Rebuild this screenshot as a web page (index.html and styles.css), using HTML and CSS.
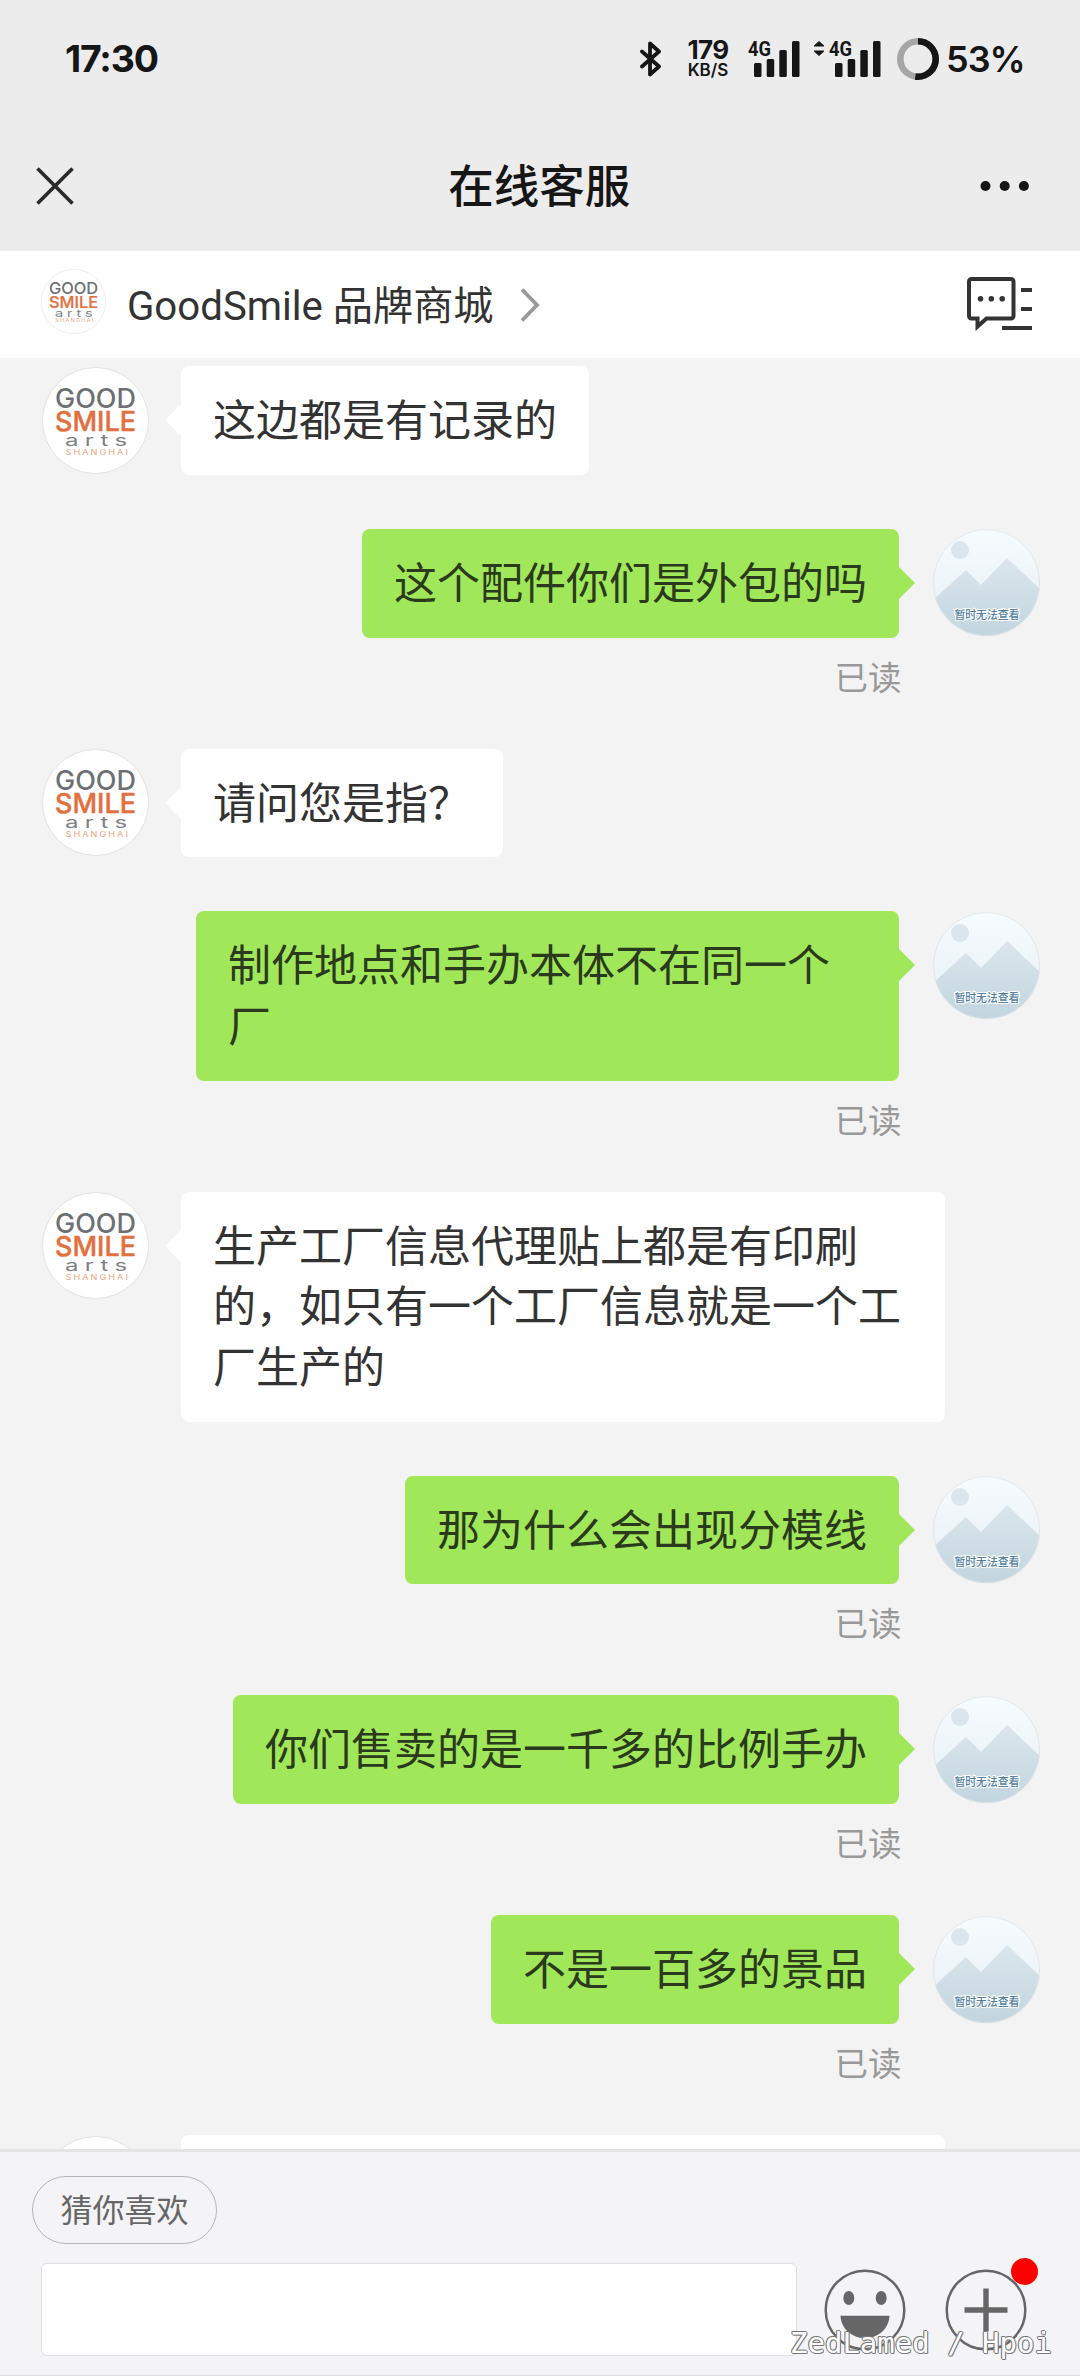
FILE: index.html
```html
<!DOCTYPE html>
<html lang="zh-CN">
<head>
<meta charset="utf-8">
<title>在线客服</title>
<link rel="stylesheet" href="styles.css">
</head>
<body>
<svg class="defs" width="0" height="0" aria-hidden="true">
  <defs>
    <linearGradient id="sky" x1="0" y1="0" x2="0" y2="1">
      <stop offset="0" stop-color="#f6fbfe"/>
      <stop offset="1" stop-color="#e6eff4"/>
    </linearGradient>
    <linearGradient id="hill" gradientUnits="userSpaceOnUse" x1="0" y1="29" x2="0" y2="107">
      <stop offset="0" stop-color="#dbe6ed"/>
      <stop offset="1" stop-color="#c2d5df"/>
    </linearGradient>
    <clipPath id="round"><circle cx="53.5" cy="53.5" r="53.5"/></clipPath>
    <symbol id="shop" viewBox="0 0 107 107">
      <circle cx="53.5" cy="53.5" r="53" fill="#fff" stroke="#e2e2e2"/>
      <g font-family="Inter, sans-serif">
        <text x="13" y="40.500" font-size="26.500" font-weight="500" fill="#6c7073" textLength="81" lengthAdjust="spacingAndGlyphs">GOOD</text>
        <text x="13" y="64" font-size="26.500" font-weight="500" fill="#e2703f" stroke="#e2703f" stroke-width=".4" textLength="81" lengthAdjust="spacingAndGlyphs">SMILE</text>
        <text transform="translate(23 79) scale(1.5 1)" font-size="16" fill="#7d8184" textLength="41.500" lengthAdjust="spacing">arts</text>
        <text transform="translate(23.500 87.500) scale(1.3 1)" font-size="7" fill="#eaa27b" textLength="48" lengthAdjust="spacing">SHANGHAI</text>
      </g>
    </symbol>
    <symbol id="user" viewBox="0 0 107 107">
      <g clip-path="url(#round)">
        <rect width="107" height="107" fill="url(#sky)"/>
        <circle cx="27" cy="21" r="9" fill="#dae5ed"/>
        <path d="M0 71 33 41 48 56 74 29 107 60V107H0Z" fill="url(#hill)"/>
        <text x="21.500" y="90.300" font-size="11" font-weight="500" textLength="65" fill="#54809f" stroke="#fff" stroke-width="2" paint-order="stroke">暂时无法查看</text>
      </g>
      <circle cx="53.5" cy="53.5" r="53" fill="none" stroke="#dde1e4" stroke-width=".8"/>
    </symbol>
    <symbol id="signal" viewBox="0 0 52 38">
      <text x="0" y="15.500" font-family="Roboto, sans-serif" font-size="21" font-weight="700" textLength="23" lengthAdjust="spacingAndGlyphs">4G</text>
      <rect x="6" y="23" width="7.500" height="14" rx="1.500"/>
      <rect x="18.700" y="19" width="7.500" height="18" rx="1.500"/>
      <rect x="31.300" y="10" width="7.500" height="27" rx="1.500"/>
      <rect x="44" y="1" width="7.500" height="36" rx="1.500"/>
    </symbol>
  </defs>
</svg>

<div class="screen">
  <header class="top">
    <div class="status">
      <span class="clock">17:30</span>
      <div class="indicators">
        <svg class="bluetooth" width="22" height="38" viewBox="0 0 22 38"><path d="M2 11.500 19 26.500 10 34.500V3.500L19 11.500 2 26.500" fill="none" stroke="#161616" stroke-width="3.800" stroke-linejoin="round" stroke-linecap="round"/></svg>
        <div class="speed"><span class="rate">179</span><span class="unit">KB/S</span></div>
        <svg class="sig1" width="52" height="38"><use href="#signal"/></svg>
        <svg class="updown" width="10" height="15" viewBox="0 0 10 15"><path d="M5 0 10 4.500V5.500H0V4.500ZM5 15 10 10.500V9.500H0V10.500Z"/></svg>
        <svg class="sig2" width="52" height="38"><use href="#signal"/></svg>
        <svg class="ring" width="42" height="42" viewBox="0 0 42 42"><g fill="none" stroke-width="6.600" transform="rotate(-90 21 21)"><circle cx="21" cy="21" r="17.700" stroke="#a6a6a6"/><circle cx="21" cy="21" r="17.700" stroke="#161616" pathLength="100" stroke-dasharray="52.500 100"/></g></svg>
        <span class="percent">53%</span>
      </div>
    </div>
    <nav class="titlebar">
      <svg width="38" height="38" viewBox="0 0 38 38"><path d="M1.500 1.500 36.500 36.500M36.500 1.500 1.500 36.500" stroke="#2b2b2b" stroke-width="3.700"/></svg>
      <h1>在线客服</h1>
      <svg width="50" height="12" viewBox="0 0 50 12"><circle cx="5.500" cy="6" r="5"/><circle cx="24.700" cy="6" r="5"/><circle cx="43.900" cy="6" r="5"/></svg>
    </nav>
  </header>

  <div class="shopbar">
    <svg class="shoplogo" width="65" height="65"><use href="#shop"/></svg>
    <span class="shopname">GoodSmile 品牌商城</span>
    <svg class="chevron" width="22" height="36" viewBox="0 0 22 36"><path d="M3 2.500 18 18 3 33.500" fill="none" stroke="#999" stroke-width="3.800"/></svg>
    <svg class="chats" width="66" height="54" viewBox="0 0 66 54"><g fill="none" stroke="#333" stroke-width="4"><path d="M4.500 2H44a2.500 2.500 0 0 1 2.500 2.500V39a2.500 2.500 0 0 1-2.500 2.500H19.500L10.500 49.500V41.500H4.500A2.500 2.500 0 0 1 2 39V4.500A2.500 2.500 0 0 1 4.500 2Z"/><path d="M54 13H65M54 32H65M35 51H65"/></g><g fill="#333"><circle cx="13.500" cy="21.700" r="2.800"/><circle cx="24.300" cy="21.700" r="2.800"/><circle cx="35.200" cy="21.700" r="2.800"/></g></svg>
  </div>

  <main class="chat">
    <div class="msg in"><svg class="avatar"><use href="#shop"/></svg><p class="bubble">这边都是有记录的</p></div>
    <div class="msg out"><div class="body"><p class="bubble">这个配件你们是外包的吗</p><span class="read">已读</span></div><svg class="avatar"><use href="#user"/></svg></div>
    <div class="msg in"><svg class="avatar"><use href="#shop"/></svg><p class="bubble">请问您是指？</p></div>
    <div class="msg out"><div class="body"><p class="bubble">制作地点和手办本体不在同一个厂</p><span class="read">已读</span></div><svg class="avatar"><use href="#user"/></svg></div>
    <div class="msg in"><svg class="avatar"><use href="#shop"/></svg><p class="bubble">生产工厂信息代理贴上都是有印刷的，如只有一个工厂信息就是一个工厂生产的</p></div>
    <div class="msg out"><div class="body"><p class="bubble">那为什么会出现分模线</p><span class="read">已读</span></div><svg class="avatar"><use href="#user"/></svg></div>
    <div class="msg out"><div class="body"><p class="bubble">你们售卖的是一千多的比例手办</p><span class="read">已读</span></div><svg class="avatar"><use href="#user"/></svg></div>
    <div class="msg out"><div class="body"><p class="bubble">不是一百多的景品</p><span class="read">已读</span></div><svg class="avatar"><use href="#user"/></svg></div>
    <div class="msg in"><svg class="avatar"><use href="#shop"/></svg><p class="bubble full"></p></div>
  </main>

  <footer class="composer">
    <button class="chip">猜你喜欢</button>
    <div class="entry">
      <div class="field"></div>
      <svg class="emoji" width="82" height="82" viewBox="0 0 82 82"><circle cx="41" cy="41" r="39.300" fill="none" stroke="#666" stroke-width="2.500"/><g fill="#666"><ellipse cx="24.800" cy="29" rx="5.500" ry="7"/><ellipse cx="57.200" cy="29" rx="5.500" ry="7"/><path d="M16.500 46.700H65.500C65 60 54 69 41 69S17 60 16.500 46.700Z"/></g></svg>
      <div class="more">
        <svg width="82" height="82" viewBox="0 0 82 82"><circle cx="41" cy="41" r="39.300" fill="none" stroke="#666" stroke-width="2.500"/><path d="M19.500 41H62.500M41 19.500V62.500" stroke="#666" stroke-width="5.400"/></svg>
        <i class="dot"></i>
      </div>
    </div>
  </footer>
  <span class="watermark">ZedLamed / Hpoi</span>
</div>
</body>
</html>
```
FILE: styles.css
```css
* { box-sizing: border-box; }

body {
  margin: 0;
  background: #f3f3f3;
  color: #333;
  font-family: "Noto Sans CJK SC", sans-serif;
}

svg { display: block; flex: none; }
.defs { position: absolute; }

.screen {
  position: relative;
  display: flex;
  flex-direction: column;
  width: 1080px;
  height: 2376px;
  overflow: hidden;
}

.top { height: 251px; background: #ececec; color: #161616; fill: #161616; }

.status {
  display: flex;
  justify-content: space-between;
  height: 118px;
  padding: 0 55px 0 65px;
  font-family: Inter, sans-serif;
  font-weight: 700;
}
.clock { font-size: 37.5px; line-height: 118px; letter-spacing: -1.2px; }
.indicators { display: flex; align-items: center; }
.speed {
  display: flex;
  flex-direction: column;
  align-items: center;
  width: 46px;
  margin-left: 23px;
}
.rate { font-size: 26px; line-height: 20px; letter-spacing: -0.6px; }
.unit { padding-top: 1px; font-size: 17px; line-height: 18px; font-weight: 600; }
.sig1 { margin-left: 17px; }
.updown { margin: 0 5px 22px 14px; }
.ring { margin-left: 16px; }
.percent { width: 79px; margin-left: 7px; font-size: 36px; font-weight: 600; letter-spacing: -1px; white-space: nowrap; }

.titlebar {
  display: grid;
  grid-template-columns: 1fr auto 1fr;
  align-items: center;
  height: 135px;
  padding: 0 50px 0 35.5px;
}
.titlebar svg:last-child { justify-self: end; }
.titlebar h1 { margin: 0; padding: 0 0 6px 13px; font-size: 45.5px; font-weight: 500; line-height: 60px; }

.shopbar {
  display: flex;
  align-items: center;
  height: 107px;
  padding: 0 47px 0 41px;
  background: #fff;
}
.shoplogo { margin-bottom: 6px; }
.shopname { margin-left: 21px; padding-top: 5px; font-family: Roboto, "Noto Sans CJK SC", sans-serif; font-size: 40.2px; line-height: 60px; }
.chevron { margin-left: 25px; }
.chats { margin-left: auto; margin-bottom: 1px; }

.chat {
  display: flex;
  flex-direction: column;
  height: 1791px;
  padding: 8px 40.5px 0 41.5px;
  overflow: hidden;
}
.msg { display: flex; flex: none; align-items: flex-start; }
.in { gap: 32.5px; margin-bottom: 54px; }
.out { gap: 33.5px; justify-content: flex-end; }
.avatar { width: 107px; height: 107px; margin-top: .5px; }
.body { display: flex; flex-direction: column; align-items: flex-end; }

.bubble {
  position: relative;
  margin: 0;
  padding: 21px 32px 27.2px;
  border-radius: 8px;
  background: #fff;
  font-size: 43px;
  line-height: 60.6px;
}
.in .bubble { max-width: 764px; }
.out .bubble { max-width: 703px; background: #a0e75a; color: #2b3a1c; }
.bubble::after {
  content: "";
  position: absolute;
  top: 38px;
  border: 16px solid transparent;
}
.in .bubble::after { right: 100%; border-left: 0; border-right-color: #fff; }
.out .bubble::after { left: 100%; border-right: 0; border-left-color: #a0e75a; }
.bubble.full { width: 764px; height: 109px; }
.read { height: 111px; margin-right: -2.5px; padding-top: 14px; font-size: 33.5px; line-height: 48px; color: #999; }

.composer {
  flex: none;
  height: 227px;
  padding: 24px 53px 0 32px;
  border-top: 3px solid #e4e4e4;
  border-bottom: 1px solid #dfdfe3;
  background: #f4f4f7;
}
.chip {
  display: block;
  width: 185px;
  height: 68px;
  padding: 0 0 4px;
  border: 1px solid #b5b5b8;
  border-radius: 34px;
  background: none;
  color: #666;
  font: 32px/60px "Noto Sans CJK SC", sans-serif;
}
.entry { display: flex; align-items: center; margin-top: 19px; padding-left: 9px; }
.field { width: 756px; height: 93px; border: 1px solid #e0e0e4; border-radius: 6px; background: #fff; }
.emoji { margin-left: 26.5px; }
.more { position: relative; margin-left: 39px; }
.dot { position: absolute; top: -11px; right: -11px; width: 27px; height: 27px; border-radius: 50%; background: #f00; }

.watermark {
  position: absolute;
  left: 790px;
  bottom: 15px;
  color: #fff;
  font: 29px/36px "DejaVu Sans Mono", monospace;
  white-space: pre;
  text-shadow: 1px 0 #777, -1px 0 #777, 0 1px #777, 0 -1px #777, 1px 1px #999, -1px -1px #999;
}
```
